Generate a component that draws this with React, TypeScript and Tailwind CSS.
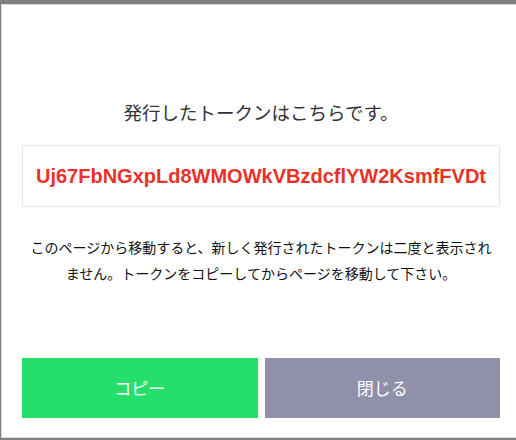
import { useState } from 'react';

const TOKEN = 'Uj67FbNGxpLd8WMOWkVBzdcflYW2KsmfFVDt';

export default function App() {
  const [copied, setCopied] = useState(false);

  return (
    <div className="w-[516px] h-[440px] bg-[#7f7f7f] pt-[4px] pl-[1px] pb-[2px] overflow-hidden">
      {/* Modal */}
      <div
        className="h-full bg-white border-t border-l border-b border-[#dcdcdc] flex flex-col pl-[20px] pr-[16px] pt-[94px] text-[#222]"
        style={{ fontFamily: '"Noto Sans CJK JP", "Noto Sans", sans-serif' }}
      >
        <h2 className="text-[18.5px] leading-[26px] text-center text-[#333]">発行したトークンはこちらです。</h2>

        <div className="mt-[20px] h-[62px] border border-[#e6e6e6] flex items-center justify-center">
          <span
            className="text-[20px] font-bold text-[#e8322a]"
            style={{ fontFamily: '"Liberation Sans", Arial, sans-serif' }}
          >
            {TOKEN}
          </span>
        </div>

        <p className="mt-[27px] text-[14px] leading-[26px] text-center text-[#111]">
          このページから移動すると、新しく発行されたトークンは二度と表示され
          <br />
          ません。トークンをコピーしてからページを移動して下さい。
        </p>

        <div className="mt-[72px] flex gap-[7px]">
          <button
            onClick={() => setCopied(true)}
            className="flex-1 h-[60px] bg-[#26de6c] text-white text-[17px]"
          >
            {copied ? 'コピー' : 'コピー'}
          </button>
          <button className="flex-1 h-[60px] bg-[#9090ab] text-white text-[17px]">閉じる</button>
        </div>
      </div>
    </div>
  );
}
